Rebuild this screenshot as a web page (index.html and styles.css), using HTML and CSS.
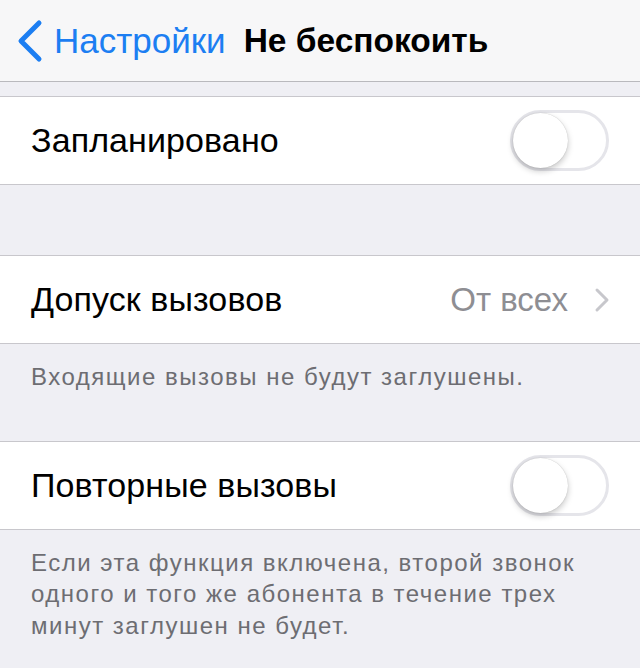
FILE: index.html
```html
<!DOCTYPE html>
<html>
<head>
    <meta charset="utf-8">
    <title>Не беспокоить</title>
    <link rel="stylesheet" href="styles.css">
</head>
<body>
    <header class="navbar">
        <a class="back" href="#">
            <svg class="back-icon" width="30" height="44" viewBox="0 0 30 44">
                <polyline points="25,4 7,22 25,40" fill="none" stroke="#1c7ef2" stroke-width="5" stroke-linecap="round" stroke-linejoin="round"/>
            </svg>
            <span>Настройки</span>
        </a>
        <h1 class="title">Не беспокоить</h1>
    </header>

    <div class="gap gap-top"></div>

    <section class="group">
        <div class="cell">
            <span class="label">Запланировано</span>
            <span class="switch"><span class="knob"></span></span>
        </div>
    </section>

    <div class="gap gap-mid"></div>

    <section class="group">
        <div class="cell">
            <span class="label">Допуск вызовов</span>
            <span class="detail">От всех</span>
            <svg class="chevron" width="16" height="26" viewBox="0 0 16 26">
                <polyline points="3,3 13,13 3,23" fill="none" stroke="#c7c7cc" stroke-width="3" stroke-linecap="round" stroke-linejoin="round"/>
            </svg>
        </div>
    </section>
    <p class="footer">Входящие вызовы не будут заглушены.</p>

    <section class="group">
        <div class="cell">
            <span class="label">Повторные вызовы</span>
            <span class="switch"><span class="knob"></span></span>
        </div>
    </section>
    <p class="footer">Если эта функция включена, второй звонок одного и того же абонента в течение трех минут заглушен не будет.</p>
</body>
</html>
```

FILE: styles.css
```css
body {
    margin: 0;
    background-color: #efeff4;
    font-family: "Liberation Sans", Arial, sans-serif;
    overflow: hidden;
}

.navbar {
    height: 82px;
    display: flex;
    align-items: center;
    padding-left: 14px;
    background-color: #f7f7f8;
    border-bottom: 1px solid #b9b9bd;
    box-sizing: border-box;
}

.back {
    display: flex;
    align-items: center;
    color: #1c7ef2;
    text-decoration: none;
    font-size: 35px;
}

.back-icon {
    margin-right: 10px;
}

.title {
    margin: 0 0 0 18px;
    font-size: 33.5px;
    font-weight: bold;
    color: #000;
}

.gap-top {
    height: 14px;
}

.gap-mid {
    height: 70px;
}

.group {
    background: white;
    border-top: 1px solid #c8c7cc;
    border-bottom: 1px solid #c8c7cc;
}

.cell {
    height: 87px;
    display: flex;
    align-items: center;
    padding: 0 31px 0 31px;
}

.label {
    flex: 1;
    font-size: 34px;
    letter-spacing: 0.1px;
    color: #000;
}

.detail {
    font-size: 33px;
    color: #8e8e93;
    margin-right: 26px;
}

.chevron {
    margin-right: -1px;
}

.switch {
    width: 99px;
    height: 61px;
    border-radius: 31px;
    border: 3px solid #e5e5ea;
    box-sizing: border-box;
    background: white;
    position: relative;
}

.knob {
    position: absolute;
    left: 0px;
    top: 0px;
    width: 55px;
    height: 55px;
    border-radius: 50%;
    background: white;
    box-shadow: 0 3px 6px rgba(0, 0, 0, 0.22), 0 0 1px rgba(0, 0, 0, 0.25);
}

.footer {
    margin: 0;
    padding: 17px 20px 48px 31px;
    font-size: 24px;
    letter-spacing: 1.5px;
    line-height: 31.5px;
    color: #6d6d72;
}
```
